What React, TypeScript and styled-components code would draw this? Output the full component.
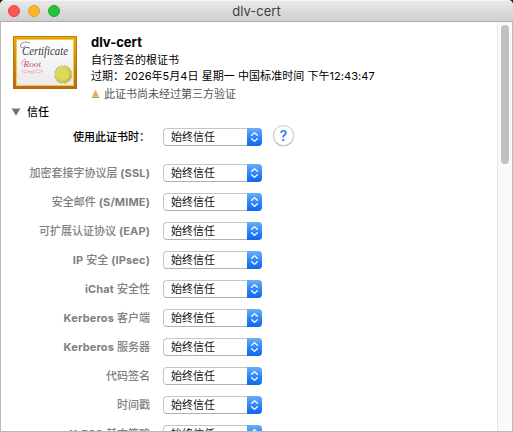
import React from "react";
import styled, { createGlobalStyle } from "styled-components";

const Global = createGlobalStyle`
  * { box-sizing: border-box; }
  html, body { margin: 0; padding: 0; }
  body {
    background: #1d1d1f;
    font-family: Inter, "Noto Sans CJK SC", sans-serif;
    font-size: 11px;
    color: #000;
    overflow: hidden;
  }
`;

const Window = styled.div`
  width: 513px;
  height: 432px;
  display: flex;
  flex-direction: column;
  border-radius: 5px 5px 0 0;
  overflow: hidden;
  background: #fff;
`;

const TitleBar = styled.header`
  height: 22px;
  flex: none;
  display: grid;
  grid-template-columns: 1fr auto 1fr;
  align-items: center;
  padding: 0 8px;
  background: linear-gradient(#e9e9e9, #cfcfcf);
  border-top: 1px solid #f3f3f3;
  border-bottom: 1px solid #aeaeae;
`;

const Lights = styled.div`
  display: flex;
  gap: 8px;
`;

const Light = styled.span<{ $fill: string; $edge: string }>`
  width: 12px;
  height: 12px;
  border-radius: 50%;
  background: ${(p) => p.$fill};
  border: 1px solid ${(p) => p.$edge};
`;

const Title = styled.h1`
  margin: 0;
  font-size: 13px;
  font-weight: 400;
  line-height: 20px;
  color: #404040;
`;

const Body = styled.div`
  flex: 1;
  min-height: 0;
  display: flex;
  border: 1px solid #b9b9b9;
  border-top: 0;
`;

const Content = styled.main`
  flex: 1;
  min-width: 0;
  overflow: hidden;
`;

const ScrollTrack = styled.div`
  width: 15px;
  flex: none;
  padding: 3px 3px 0;
  background: #fafafa;
  border-left: 1px solid #e6e6e6;
`;

const ScrollThumb = styled.div`
  width: 8px;
  height: 139px;
  border-radius: 4px;
  background: #c1c1c1;
`;

const Summary = styled.section`
  display: flex;
  gap: 13px;
  padding: 12px 0 0 11px;
  height: 80px;
`;

const Facts = styled.div`
  display: flex;
  flex-direction: column;
  white-space: nowrap;
`;

const Name = styled.h2`
  margin: 0 0 2px;
  font-size: 13px;
  font-weight: 700;
  line-height: 16px;
`;

const Fact = styled.p<{ $spacing?: string }>`
  margin: 0;
  height: 16px;
  line-height: 16px;
  letter-spacing: ${(p) => p.$spacing ?? "0"};
`;

const Warning = styled.p`
  margin: 3px 0 0;
  display: flex;
  align-items: center;
  gap: 4px;
  line-height: 14px;
  color: #555;
`;

const TrustHeading = styled.div`
  display: flex;
  align-items: center;
  gap: 6px;
  height: 20px;
  margin-bottom: 6px;
  padding-left: 10px;
  font-weight: 500;
  line-height: 20px;
`;

const Row = styled.div<{ $main?: boolean }>`
  display: flex;
  align-items: center;
  height: 18px;
  margin-bottom: ${(p) => (p.$main ? "18px" : "11px")};
`;

const Label = styled.label<{ $main?: boolean }>`
  width: 149px;
  height: 18px;
  line-height: 19px;
  margin-right: 13px;
  flex: none;
  text-align: right;
  white-space: nowrap;
  font-weight: 500;
  color: ${(p) => (p.$main ? "#000" : "#808080")};
`;

const Latin = styled.span`
  font-weight: 700;
  letter-spacing: 0.15px;
`;

const Select = styled.button`
  width: 99px;
  height: 18px;
  padding: 0;
  flex: none;
  display: flex;
  border: 1px solid #c6c6c6;
  border-bottom-color: #b0b0b0;
  border-right: 0;
  border-radius: 4px;
  background: #fff;
  font: inherit;
  line-height: 16px;
  color: #111;
  text-align: left;
`;

const Value = styled.span`
  flex: 1;
  padding-left: 7px;
`;

const Stepper = styled.span`
  width: 15px;
  height: 18px;
  margin-top: -1px;
  display: grid;
  place-items: center;
  border-radius: 0 4px 4px 0;
  background: linear-gradient(#67b0f8, #2f83f8 55%, #0d68ef);
`;

const Help = styled.button`
  width: 21px;
  height: 21px;
  margin: -3px 0 0 11px;
  padding: 0;
  border: 1px solid #cbcbcb;
  border-radius: 50%;
  background: #fff;
  box-shadow: 0 0.5px 0.5px #bbb;
  font: 500 14px/19px Inter, sans-serif;
  color: #1672ee;
`;

const CertificateIcon = () => {
  const teeth = Array.from({ length: 36 }, (_, i) => {
    const r = i % 2 ? 7.8 : 9.1;
    const a = (i * Math.PI) / 18;
    return `${51.2 + r * Math.cos(a)},${40.5 + r * Math.sin(a)}`;
  }).join(" ");
  return (
    <svg width="66" height="55" viewBox="0 0 66 55">
      <defs>
        <linearGradient id="frame" x1="0" y1="0" x2="0" y2="1">
          <stop offset="0" stopColor="#e5ac0c" />
          <stop offset="1" stopColor="#ba6810" />
        </linearGradient>
        <linearGradient id="paper" x1="0" y1="0" x2="0" y2="1">
          <stop offset="0" stopColor="#fff" />
          <stop offset="1" stopColor="#e9e9ec" />
        </linearGradient>
        <linearGradient id="seal" x1="0" y1="0" x2="1" y2="1">
          <stop offset="0" stopColor="#f0ed83" />
          <stop offset="1" stopColor="#bdb532" />
        </linearGradient>
      </defs>
      <rect x="1" y="2" width="64" height="53" fill="url(#frame)" />
      <rect x="1.5" y="2.5" width="63" height="52" fill="none" stroke="#aa6808" strokeOpacity=".65" />
      <rect x="4" y="5" width="58" height="47" fill="#f4c945" />
      <rect x="5" y="6" width="56" height="45" fill="url(#paper)" />
      <text x="10" y="20.5" fontFamily="Liberation Serif, serif" fontStyle="italic" fontSize="12" fill="#3a3a46" textLength="46" lengthAdjust="spacingAndGlyphs">Certificate</text>
      <path d="M18 9C13 7 8 9 8.500 12s4 1.500 5-.5" fill="none" stroke="#4a4a55" strokeWidth=".6" />
      <text x="11.500" y="32.500" fontFamily="Liberation Serif, serif" fontStyle="italic" fontSize="9" fill="#cc4a58" textLength="17.500" lengthAdjust="spacingAndGlyphs">Root</text>
      <path d="M11 31.500c-2-1-1-6 3-6.500" fill="none" stroke="#cc4a58" strokeWidth=".5" />
      <path d="M9.500 37c5-2 8 2 11 0s6-1 10.500 0M10 37.500c4 3 7-1 10 1 3-2 6 2 10-1M18 39.300q2 1 4 0" fill="none" stroke="#dfa0a6" strokeWidth=".6" />
      <polygon points={teeth} fill="url(#seal)" stroke="#aaa13a" strokeWidth=".6" />
      <circle cx="51.200" cy="40.500" r="6" fill="#dfd95a" stroke="#cdc650" strokeWidth=".4" />
    </svg>
  );
};

const WarningIcon = () => (
  <svg width="9" height="10" viewBox="0 0 9 10">
    <path d="M4.500 1 7.500 7.500h-6z" fill="#e3b14d" stroke="#e6c67e" strokeWidth="1" strokeLinejoin="round" />
    <path d="M.6 8.500h7.800" stroke="#b49a66" strokeWidth="1" />
  </svg>
);

const Arrows = () => (
  <svg width="9" height="12" viewBox="0 0 9 12">
    <path d="M1.700 4.300 4.500 1.600 7.300 4.300M1.700 7.700 4.500 10.400 7.300 7.700" fill="none" stroke="#fff" strokeWidth="1.300" strokeLinecap="round" strokeLinejoin="round" />
  </svg>
);

const Popup = () => (
  <Select>
    <Value>始终信任</Value>
    <Stepper><Arrows /></Stepper>
  </Select>
);

const policies: React.ReactNode[] = [
  <>加密套接字协议层 <Latin>(SSL)</Latin></>,
  <>安全邮件 <Latin>(S/MIME)</Latin></>,
  <>可扩展认证协议 <Latin>(EAP)</Latin></>,
  <><Latin>IP</Latin> 安全 <Latin>(IPsec)</Latin></>,
  <><Latin>iChat</Latin> 安全性</>,
  <><Latin>Kerberos</Latin> 客户端</>,
  <><Latin>Kerberos</Latin> 服务器</>,
  <>代码签名</>,
  <>时间戳</>,
  <><Latin>X.509</Latin> 基本策略</>,
];

export default function App() {
  return (
    <>
      <Global />
      <Window>
        <TitleBar>
          <Lights>
            <Light $fill="#fc5652" $edge="#df4744" />
            <Light $fill="#fdb72b" $edge="#dea02e" />
            <Light $fill="#27c237" $edge="#21a730" />
          </Lights>
          <Title>dlv-cert</Title>
        </TitleBar>
        <Body>
          <Content>
            <Summary>
              <CertificateIcon />
              <Facts>
                <Name>dlv-cert</Name>
                <Fact>自行签名的根证书</Fact>
                <Fact $spacing="0.05px">过期：2026年5月4日 星期一 中国标准时间 下午12:43:47</Fact>
                <Warning><WarningIcon />此证书尚未经过第三方验证</Warning>
              </Facts>
            </Summary>
            <TrustHeading>
              <svg width="10" height="8" viewBox="0 0 10 8"><path d="M.5.5h9L5 7.800z" fill="#777" /></svg>
              信任
            </TrustHeading>
            <Row $main>
              <Label $main>使用此证书时：</Label>
              <Popup />
              <Help>?</Help>
            </Row>
            {policies.map((name, i) => (
              <Row key={i}>
                <Label>{name}</Label>
                <Popup />
              </Row>
            ))}
          </Content>
          <ScrollTrack><ScrollThumb /></ScrollTrack>
        </Body>
      </Window>
    </>
  );
}
